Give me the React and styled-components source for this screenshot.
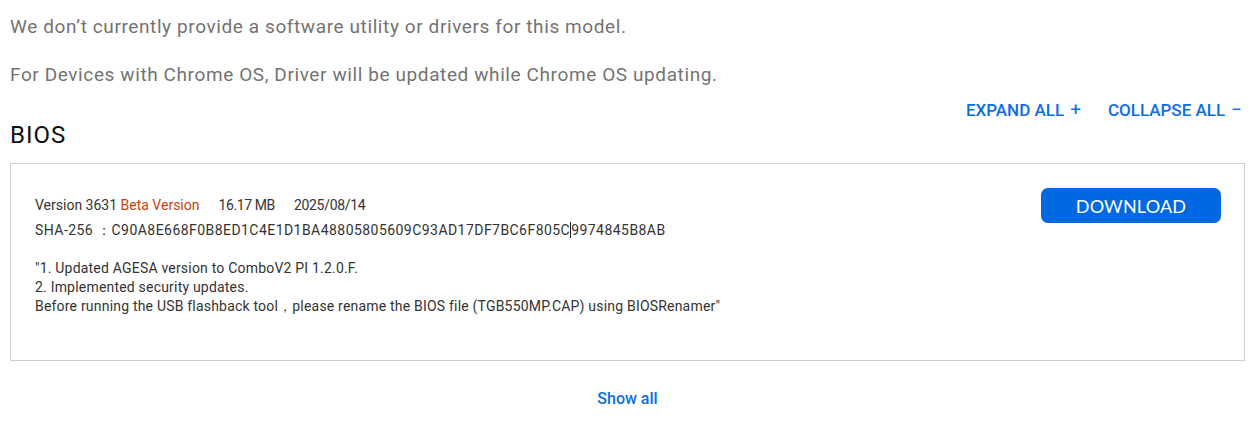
import React from "react";
import styled, { createGlobalStyle } from "styled-components";

const Global = createGlobalStyle`
  html, body { margin: 0; padding: 0; background: #fff; }
  body { font-family: Roboto, "Liberation Sans", sans-serif; }
`;

const Page = styled.div`
  padding: 14px 10px 0 10px;
  display: flex;
  flex-direction: column;
`;

const Notice = styled.p`
  margin: 0 0 ${(p) => p.$gap || 0}px 0;
  font-size: 19px;
  line-height: 26px;
  color: #737373;
  font-family: Roboto, "Liberation Sans", sans-serif;
  letter-spacing: 0.6px;
`;

const Toolbar = styled.div`
  display: flex;
  justify-content: flex-end;
  gap: 27px;
  padding-right: 3px;
  margin-top: 10px;
`;

const ToolLink = styled.a`
  color: #0a6ee6;
  font-size: 17px;
  font-weight: 500;
  text-decoration: none;
  display: flex;
  align-items: center;
  gap: 6px;
  cursor: pointer;
`;

const Sign = styled.span`
  font-weight: 400;
  font-size: 19px;
`;

const Heading = styled.h2`
  margin: 0 0 14px 0;
  font-size: 24px;
  font-weight: 400;
  color: #111;
  line-height: 28px;
  letter-spacing: 1px;
`;

const Card = styled.div`
  border: 1px solid #cfcfcf;
  height: 198px;
  box-sizing: border-box;
  display: flex;
  justify-content: space-between;
  padding: 24px 23px 0 24px;
`;

const Info = styled.div`
  display: flex;
  flex-direction: column;
  color: #333;
  font-size: 14px;
`;

const MetaRow = styled.div`
  display: flex;
  gap: 19px;
  line-height: 18px;
  margin-top: 8px;
`;

const Beta = styled.span`
  color: #c7410f;
`;

const Plain = styled.span`
  letter-spacing: ${(p) => p.$ls || 0}px;
`;

const Sha = styled.div`
  line-height: 18px;
  margin-top: 7px;
  letter-spacing: 0.45px;
`;

const Caret = styled.span`
  display: inline-block;
  width: 1px;
  height: 16px;
  background: #222;
  vertical-align: -3px;
`;

const Notes = styled.div`
  margin-top: 20px;
  line-height: 19px;
  white-space: pre-line;
  letter-spacing: 0.2px;
`;

const DownloadButton = styled.button`
  width: 180px;
  height: 35px;
  margin-top: 0;
  border: none;
  border-radius: 7px;
  background: #0068e0;
  color: #fff;
  font-family: Lato, "Open Sans", sans-serif;
  font-size: 18px;
  letter-spacing: 0.2px;
  cursor: pointer;
`;

const Footer = styled.div`
  display: flex;
  justify-content: center;
  padding-top: 28px;
`;

const ShowAll = styled.a`
  color: #0a6ee6;
  font-size: 16px;
  font-weight: 500;
  cursor: pointer;
`;

export default function App() {
  return (
    <>
      <Global />
      <Page>
        <Notice $gap={22}>We don’t currently provide a software utility or drivers for this model.</Notice>
        <Notice>For Devices with Chrome OS, Driver will be updated while Chrome OS updating.</Notice>
        <Toolbar>
          <ToolLink>EXPAND ALL <Sign>+</Sign></ToolLink>
          <ToolLink>COLLAPSE ALL <Sign>−</Sign></ToolLink>
        </Toolbar>
        <Heading>BIOS</Heading>
        <Card>
          <Info>
            <MetaRow>
              <span>Version 3631 <Beta>Beta Version</Beta></span>
              <Plain $ls={-0.4}>16.17 MB</Plain>
              <Plain $ls={-0.3}>2025/08/14</Plain>
            </MetaRow>
            <Sha>
              SHA-256 ：C90A8E668F0B8ED1C4E1D1BA48805805609C93AD17DF7BC6F805C<Caret />9974845B8AB
            </Sha>
            <Notes>
              {"\"1. Updated AGESA version to ComboV2 PI 1.2.0.F.\n2. Implemented security updates.\nBefore running the USB flashback tool，please rename the BIOS file (TGB550MP.CAP) using BIOSRenamer\""}
            </Notes>
          </Info>
          <DownloadButton>DOWNLOAD</DownloadButton>
        </Card>
        <Footer>
          <ShowAll>Show all</ShowAll>
        </Footer>
      </Page>
    </>
  );
}
